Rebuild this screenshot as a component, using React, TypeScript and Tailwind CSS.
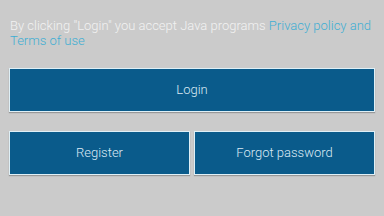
export default function App() {
  return (
    <div className="w-[384px] h-[216px] bg-[#cbcbcb] overflow-hidden" style={{ fontFamily: "Roboto, 'Liberation Sans', sans-serif" }}>
      <div className="pt-[18px] px-[10px] text-[13px] leading-[15px] font-light text-[#f2f2f2]">
        By clicking "Login" you accept Java programs <span className="text-[#3eaed3]">Privacy policy and Terms of use</span>
      </div>
      <div className="mt-[20px] px-[9px]">
        <button className="w-full h-[44px] bg-[#0a5b8b] border border-[#dff0f7] text-[#dbeaf5] text-[13px] font-light shadow-[0_1px_1px_rgba(0,0,0,0.25)]">Login</button>
      </div>
      <div className="mt-[19px] px-[9px] flex gap-[4px]">
        <button className="flex-1 h-[44px] bg-[#0a5b8b] border border-[#dff0f7] text-[#dbeaf5] text-[13px] font-light shadow-[0_1px_1px_rgba(0,0,0,0.25)]">Register</button>
        <button className="flex-1 h-[44px] bg-[#0a5b8b] border border-[#dff0f7] text-[#dbeaf5] text-[13px] font-light shadow-[0_1px_1px_rgba(0,0,0,0.25)]">Forgot password</button>
      </div>
    </div>
  );
}
